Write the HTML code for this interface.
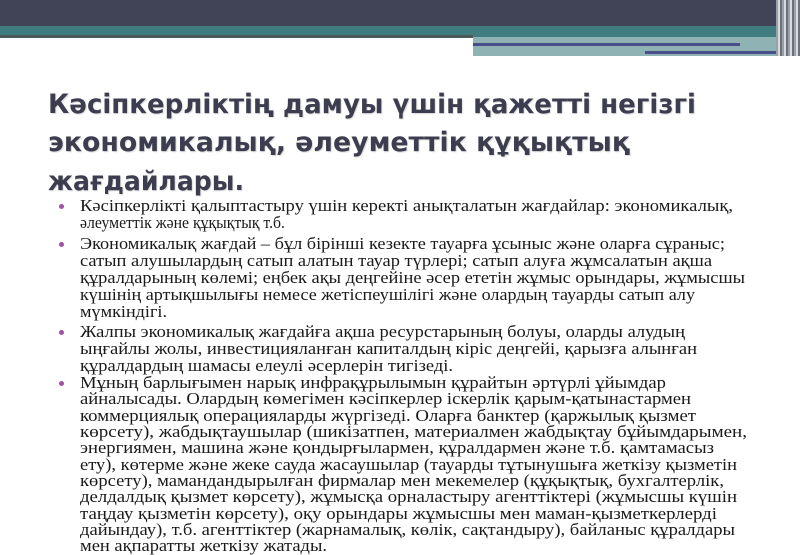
<!DOCTYPE html>
<html><head><meta charset="utf-8">
<style>
html,body{margin:0;padding:0}
body{width:800px;height:553px;position:relative;overflow:hidden;background:#fff;font-family:"Liberation Serif","DejaVu Serif",serif}
.b{position:absolute}
.t{position:absolute;left:48px;font-family:"DejaVu Sans","Liberation Sans",sans-serif;font-weight:bold;font-size:27px;line-height:38px;color:#3c3d4e;white-space:nowrap;transform-origin:0 0;text-shadow:1px 1px 1px rgba(0,0,0,.15)}
.l{position:absolute;left:80px;font-size:17px;line-height:18px;color:#1a1a1a;white-space:nowrap;transform-origin:0 0}
.d{position:absolute;left:59px;width:5px;height:5px;border-radius:50%;background:#a24fa8}
</style></head><body>
<div class="b" style="left:0;top:0;width:800px;height:27px;background:#414456"></div>
<div class="b" style="left:0;top:26px;width:800px;height:11px;background:#3f7d80"></div>
<div class="b" style="left:0;top:35px;width:473px;height:3px;background:#4c5a5c"></div>
<div class="b" style="left:473px;top:37px;width:327px;height:19px;background:#8fb3b4"></div>
<div class="b" style="left:473px;top:43px;width:267px;height:3px;background:#4a4f8a"></div>
<div class="b" style="left:645px;top:51px;width:140px;height:3px;background:#4a4f8a"></div>
<div class="b" style="left:776px;top:0;width:24px;height:56px;background:repeating-linear-gradient(90deg,#9aa0a8 0 2px,#d8dadc 2px 4px,#6c707c 4px 6px)"></div>

<div class="t" data-w="648" style="top:86px">Кәсіпкерліктің дамуы үшін қажетті негізгі</div>
<div class="t" data-w="582" style="top:124px">экономикалық, әлеуметтік құқықтық</div>
<div class="t" data-w="196" style="top:163px">жағдайлары.</div>

<div class="d" style="top:204px"></div>
<div class="l" data-w="653" style="top:197px">Кәсіпкерлікті қалыптастыру үшін керекті анықталатын жағдайлар: экономикалық,</div>
<div class="l" data-w="205" style="top:214px">әлеуметтік және құқықтық т.б.</div>
<div class="d" style="top:242px"></div>
<div class="l" data-w="645" style="top:235px">Экономикалық жағдай – бұл бірінші кезекте тауарға ұсыныс және оларға сұраныс;</div>
<div class="l" data-w="632" style="top:252px">сатып алушылардың сатып алатын тауар түрлері; сатып алуға жұмсалатын ақша</div>
<div class="l" data-w="665" style="top:269px">құралдарының көлемі; еңбек ақы деңгейіне әсер ететін жұмыс орындары, жұмысшы</div>
<div class="l" data-w="615" style="top:286px">күшінің артықшылығы немесе жетіспеушілігі және олардың тауарды сатып алу</div>
<div class="l" data-w="87" style="top:303px">мүмкіндігі.</div>
<div class="d" style="top:330px"></div>
<div class="l" data-w="605" style="top:323px">Жалпы экономикалық жағдайға ақша ресурстарының болуы, оларды алудың</div>
<div class="l" data-w="617" style="top:340px">ыңғайлы жолы, инвестицияланған капиталдың кіріс деңгейі, қарызға алынған</div>
<div class="l" data-w="373" style="top:357px">құралдардың шамасы елеулі әсерлерін тигізеді.</div>
<div class="d" style="top:381px"></div>
<div class="l" data-w="586" style="top:374px">Мұның барлығымен нарық инфрақұрылымын құрайтын әртүрлі ұйымдар</div>
<div class="l" data-w="611" style="top:390px">айналысады. Олардың көмегімен кәсіпкерлер іскерлік қарым-қатынастармен</div>
<div class="l" data-w="616" style="top:407px">коммерциялық операцияларды жүргізеді. Оларға банктер (қаржылық қызмет</div>
<div class="l" data-w="667" style="top:423px">көрсету), жабдықтаушылар (шикізатпен, материалмен жабдықтау бұйымдарымен,</div>
<div class="l" data-w="634" style="top:439px">энергиямен, машина және қондырғылармен, құралдармен және т.б. қамтамасыз</div>
<div class="l" data-w="657" style="top:456px">ету), көтерме және жеке сауда жасаушылар (тауарды тұтынушыға жеткізу қызметін</div>
<div class="l" data-w="644" style="top:472px">көрсету), мамандандырылған фирмалар мен мекемелер (құқықтық, бухгалтерлік,</div>
<div class="l" data-w="657" style="top:488px">делдалдық қызмет көрсету), жұмысқа орналастыру агенттіктері (жұмысшы күшін</div>
<div class="l" data-w="637" style="top:505px">таңдау қызметін көрсету), оқу орындары жұмысшы мен маман-қызметкерлерді</div>
<div class="l" data-w="655" style="top:521px">дайындау), т.б. агенттіктер (жарнамалық, көлік, сақтандыру), байланыс құралдары</div>
<div class="l" data-w="247" style="top:537px">мен ақпаратты жеткізу жатады.</div>
<script>
document.querySelectorAll('[data-w]').forEach(function(e){
 var w=parseFloat(e.getAttribute('data-w'));var r=e.getBoundingClientRect().width;
 if(r>0)e.style.transform='scaleX('+(w/r)+')';
});
</script>
</body></html>
